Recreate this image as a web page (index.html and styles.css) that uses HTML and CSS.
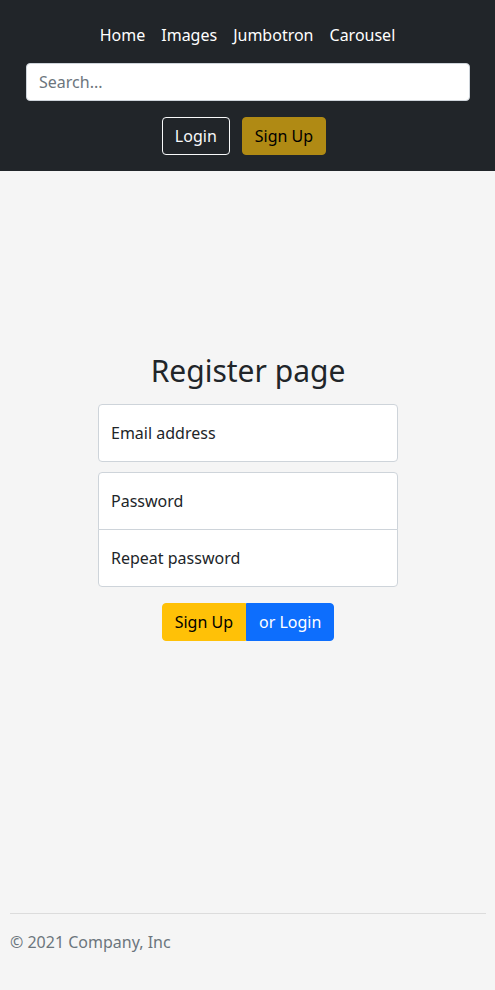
FILE: index.html
```html
<!DOCTYPE html>
<html lang="en">
<head>
<meta charset="utf-8">
<title>Register page</title>
<link rel="stylesheet" href="styles.css">
</head>
<body>
<header class="header">
  <ul class="nav">
    <li><a href="#" class="nav-link">Home</a></li>
    <li><a href="#" class="nav-link">Images</a></li>
    <li><a href="#" class="nav-link">Jumbotron</a></li>
    <li><a href="#" class="nav-link">Carousel</a></li>
  </ul>
  <form class="search-form">
    <input type="search" class="search-input" placeholder="Search...">
  </form>
  <div class="header-actions">
    <button type="button" class="btn btn-outline-light">Login</button>
    <button type="button" class="btn btn-warning-dim">Sign Up</button>
  </div>
</header>
<main class="main">
  <form class="form-signin">
    <h1 class="title">Register page</h1>
    <div class="field field-email">
      <span class="field-label">Email address</span>
    </div>
    <div class="field field-top">
      <span class="field-label">Password</span>
    </div>
    <div class="field field-bottom">
      <span class="field-label">Repeat password</span>
    </div>
    <div class="btn-group">
      <button type="button" class="btn btn-warning group-first">Sign Up</button>
      <button type="button" class="btn btn-primary group-last">or Login</button>
    </div>
  </form>
</main>
<footer class="footer">
  <hr class="footer-rule">
  <p class="footer-text">© 2021 Company, Inc</p>
</footer>
</body>
</html>
```

FILE: styles.css
```css
* { box-sizing: border-box; }
html, body { margin: 0; padding: 0; }
body {
  font-family: "Noto Sans", "Open Sans", sans-serif;
  font-size: 16px;
  line-height: 24px;
  color: #212529;
  background: #f5f5f5;
  height: 990px;
}
.header {
  background: #212529;
  padding: 15px 0 16px;
}
.nav {
  list-style: none;
  margin: 0;
  padding: 0;
  display: flex;
  justify-content: center;
}
.nav-link {
  display: block;
  padding: 8px 8px;
  color: #fff;
  text-decoration: none;
}
.search-form {
  margin: 8px 0 0;
  display: flex;
  justify-content: center;
}
.search-input {
  width: 444px;
  height: 38px;
  margin-left: 1px;
  border: 1px solid #ced4da;
  border-radius: 4px;
  background: #fff;
  padding: 6px 12px;
  font-family: inherit;
  font-size: 16px;
  line-height: 24px;
  color: #212529;
}
.search-input::placeholder { color: #6c757d; }
.header-actions {
  margin-top: 16px;
  display: flex;
  justify-content: center;
  gap: 12px;
  padding-right: 7px;
}
.btn {
  font-family: inherit;
  font-size: 16px;
  line-height: 24px;
  padding: 6px 12px;
  border: 1px solid transparent;
  border-radius: 4px;
  height: 38px;
  cursor: pointer;
}
.btn-outline-light {
  background: transparent;
  color: #f8f9fa;
  border-color: #f8f9fa;
}
.btn-warning-dim {
  background: #b08a14;
  border-color: #b08a14;
  color: #000;
}
.btn-warning {
  background: #ffc107;
  border-color: #ffc107;
  color: #000;
}
.btn-primary {
  background: #0d6efd;
  border-color: #0d6efd;
  color: #fff;
}
.main {
  padding-top: 182px;
}
.form-signin {
  width: 300px;
  margin: 0 auto 0 98px;
}
.title {
  margin: 0 0 16px;
  font-size: 30px;
  line-height: 35px;
  font-weight: 400;
  text-align: center;
  color: #212529;
}
.field {
  height: 58px;
  background: #fff;
  border: 1px solid #ced4da;
  border-radius: 4px;
  padding: 16px 12px;
}
.field-label {
  display: block;
  line-height: 24px;
  color: #212529;
}
.field-email { margin-bottom: 10px; }
.field-top {
  border-bottom-left-radius: 0;
  border-bottom-right-radius: 0;
}
.field-bottom {
  margin-top: -1px;
  border-top-left-radius: 0;
  border-top-right-radius: 0;
}
.btn-group {
  margin-top: 16px;
  display: flex;
  justify-content: center;
}
.group-first {
  border-top-right-radius: 0;
  border-bottom-right-radius: 0;
}
.group-last {
  border-top-left-radius: 0;
  border-bottom-left-radius: 0;
}
.footer {
  margin-top: 272px;
  padding: 0 9px 0 10px;
}
.footer-rule {
  margin: 0;
  border: 0;
  border-top: 1px solid #dcdcdc;
}
.footer-text {
  margin: 16px 0 0;
  color: #6c757d;
}
```
